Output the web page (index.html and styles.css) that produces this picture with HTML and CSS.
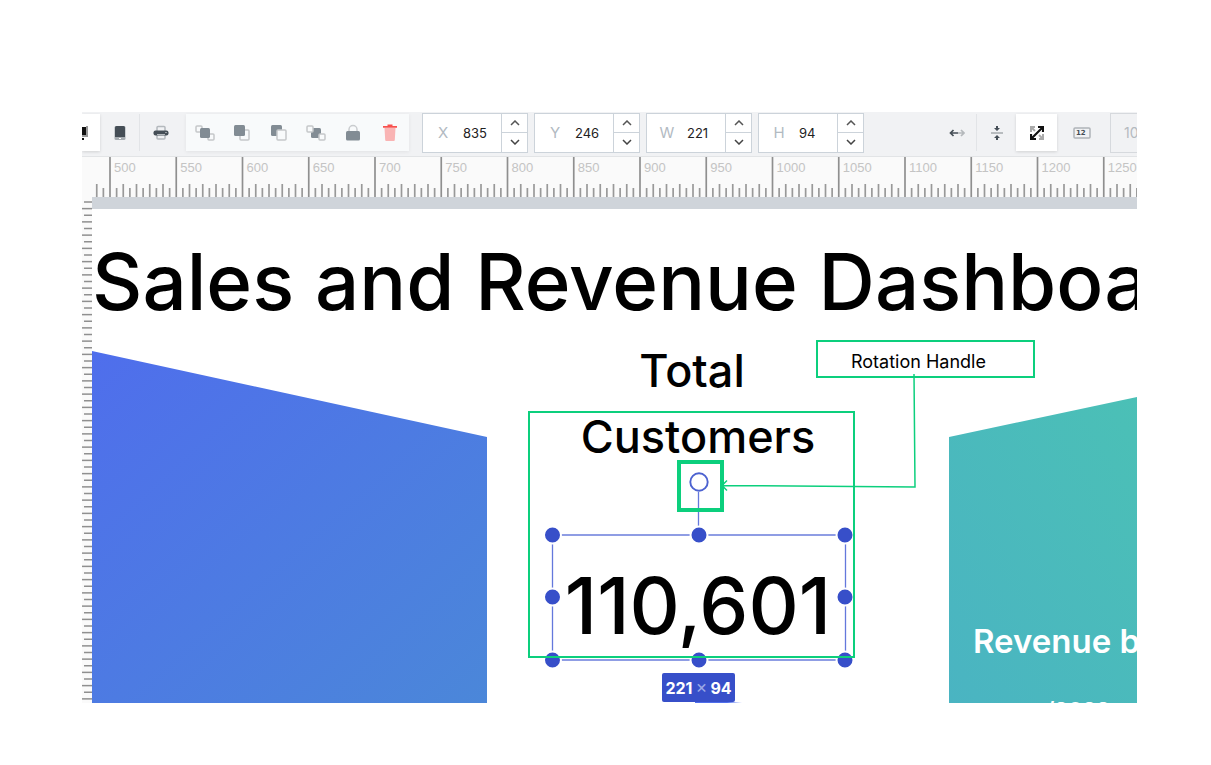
FILE: index.html
```html
<!DOCTYPE html>
<html lang="en">
<head>
<meta charset="utf-8">
<title>Sales and Revenue Dashboard</title>
<link rel="stylesheet" href="styles.css">
</head>
<body>
<main class="editor">
  <header class="toolbar">
    <button class="tool tool-edge active" aria-label="Desktop view"><svg width="18" height="20" viewBox="0 0 18 20"><path d="M0 4h5v9H0z" fill="#111"/><path d="M4 3h2v11H0v-2h4z" fill="#999"/><path d="M0 15h2v2H0z" fill="#111"/></svg></button>
    <button class="tool tool-phone" aria-label="Mobile view"><svg width="12" height="16" viewBox="0 0 12 16"><rect x=".5" y="1" width="11" height="14" rx="1.5" fill="#a5abb0"/><path d="M1 2.500Q1 1 2.500 1h7Q11 1 11 2.500V12H1z" fill="#454e56"/><path d="M5 13.500h2" stroke="#fff"/></svg></button>
    <span class="divider"></span>
    <button class="tool tool-print" aria-label="Print"><svg width="16" height="16" viewBox="0 0 16 16"><path d="M4 6V2.500Q4 1.500 5 1.500h6q1 0 1 1V6M4 10v3q0 1 1 1h6q1 0 1-1v-3" fill="none" stroke="#b4b9bd" stroke-width="1.500"/><rect x=".5" y="5.500" width="15" height="5" rx="2" fill="#454e56"/><path d="M4 9.500h8" stroke="#b4b9bd"/><circle cx="13" cy="7.500" r=".6" fill="#fff"/></svg></button>
    <div class="arrange">
      <button class="tool" aria-label="Bring forward"><svg width="20" height="18" viewBox="0 0 20 18"><g fill="none" stroke="#c5c8ca" stroke-width="1.500"><rect x="1" y="2" width="6" height="6" rx="1"/><rect x="13" y="10" width="6" height="6" rx="1"/></g><rect x="5" y="4" width="10" height="10" rx="1.500" fill="#828c94"/></svg></button>
      <button class="tool" aria-label="Bring to front"><svg width="18" height="18" viewBox="0 0 18 18"><rect x="7" y="6" width="9" height="10" rx="1" fill="none" stroke="#c5c8ca" stroke-width="1.500"/><rect x="1" y="1" width="11" height="11" rx="1.500" fill="#828c94"/></svg></button>
      <button class="tool" aria-label="Send to back"><svg width="18" height="18" viewBox="0 0 18 18"><rect x="1" y="1" width="11" height="11" rx="1.500" fill="#828c94"/><rect x="7" y="6" width="9" height="10" rx="1" fill="#f8fafb" stroke="#c5c8ca" stroke-width="1.500"/></svg></button>
      <button class="tool" aria-label="Send backward"><svg width="20" height="18" viewBox="0 0 20 18"><rect x="5" y="4" width="10" height="10" rx="1.500" fill="#828c94"/><g fill="#f8fafb" stroke="#c5c8ca" stroke-width="1.500"><rect x="1" y="2" width="6" height="6" rx="1"/><rect x="13" y="10" width="6" height="6" rx="1"/></g></svg></button>
      <button class="tool" aria-label="Lock"><svg width="16" height="18" viewBox="0 0 16 18"><path d="M4 8V5.500a4 4 0 0 1 8 0V8" fill="none" stroke="#c9cccf" stroke-width="1.500"/><rect x="1" y="7" width="14" height="9.500" rx="1.500" fill="#828c94"/></svg></button>
      <button class="tool" aria-label="Delete"><svg width="16" height="18" viewBox="0 0 16 18"><path d="M2.500 4h11l-.7 12q0 1-1 1H4.200q-1 0-1-1z" fill="#f9b4b4"/><path d="M1 2.800h14M5.500 1.500h5" stroke="#f8514e" stroke-width="1.800"/></svg></button>
    </div>
    <div class="fields">
      <div class="field"><label for="fx">X</label><input id="fx" value="835"><div class="steps"><button aria-label="Increase X"><svg width="10" height="6"><use href="#up"/></svg></button><button aria-label="Decrease X"><svg width="10" height="6"><use href="#down"/></svg></button></div></div>
      <div class="field"><label for="fy">Y</label><input id="fy" value="246"><div class="steps"><button aria-label="Increase Y"><svg width="10" height="6"><use href="#up"/></svg></button><button aria-label="Decrease Y"><svg width="10" height="6"><use href="#down"/></svg></button></div></div>
      <div class="field"><label for="fw">W</label><input id="fw" value="221"><div class="steps"><button aria-label="Increase width"><svg width="10" height="6"><use href="#up"/></svg></button><button aria-label="Decrease width"><svg width="10" height="6"><use href="#down"/></svg></button></div></div>
      <div class="field"><label for="fh">H</label><input id="fh" value="94"><div class="steps"><button aria-label="Increase height"><svg width="10" height="6"><use href="#up"/></svg></button><button aria-label="Decrease height"><svg width="10" height="6"><use href="#down"/></svg></button></div></div>
    </div>
    <div class="view">
      <button class="tool" aria-label="Fit width"><svg width="16" height="12" viewBox="0 0 16 12" fill="none" stroke-width="1.700"><path d="M9 6h6M12 3l3 3-3 3" stroke="#b5b9bc"/><path d="M9 6H1.500M4.500 3l-3 3 3 3" stroke="#454e56"/></svg></button>
      <span class="divider"></span>
      <button class="tool" aria-label="Fit height"><svg width="14" height="16" viewBox="0 0 14 16"><path d="M1 8h12" stroke="#a5aaae" stroke-width="1.500"/><path d="M6 1h2v2h2L7 6 4 3h2zM6 15h2v-2h2L7 10l-3 3h2z" fill="#454e56"/></svg></button>
      <button class="tool active" aria-label="Fit page"><svg width="14" height="14" viewBox="0 0 14 14"><g stroke="#aaa" stroke-width="2" fill="none"><path d="M1 6V1h4M1 1l4 4M13 8v5H9M13 13 9 9"/></g><g stroke="#111" stroke-width="2.200" fill="none"><path d="M8 1h5v5M13 1 1 13M1 8v5h5"/></g></svg></button>
      <button class="tool" aria-label="Actual size"><svg width="18" height="12" viewBox="0 0 18 12"><rect x="1" y="1" width="16" height="10" rx="1" fill="none" stroke="#afb4b8" stroke-width="1.500"/><text x="3" y="8" class="icon-text">12</text></svg></button>
      <input class="zoom" aria-label="Zoom" value="100">
    </div>
  </header>
  <svg class="ruler-top" id="rulerTop" role="img" aria-label="Horizontal ruler"></svg>
  <div class="workspace">
    <svg class="ruler-left" id="rulerLeft" role="img" aria-label="Vertical ruler"></svg>
    <section class="canvas">
      <svg class="layer" aria-hidden="true">
        <defs>
          <linearGradient id="blue" x1="0" y1="0" x2="1" y2="1"><stop offset="0" stop-color="#4f6eec"/><stop offset="1" stop-color="#4b87d9"/></linearGradient>
          <linearGradient id="teal" x1="0" y1="1" x2="1" y2="0"><stop offset="0" stop-color="#4ab4c2"/><stop offset="1" stop-color="#4bc0b6"/></linearGradient>
          <path id="up" d="M1 5l4-4 4 4" fill="none" stroke="#555" stroke-width="1.500"/>
          <path id="down" d="M1 1l4 4 4-4" fill="none" stroke="#444" stroke-width="1.500"/>
        </defs>
        <path d="M0 142 395 228V494H0z" fill="url(#blue)"/>
        <path d="M857 228l188-40v306H857z" fill="url(#teal)"/>
        <path d="M603 492q25 0 47 2h-47z" fill="#4f6eec"/>
      </svg>
      <h1 class="node title">Sales and Revenue Dashboard</h1>
      <h2 class="node metric">Total&nbsp;<br>Customers</h2>
      <p class="node value">110,601</p>
      <p class="node revenue">Revenue by</p>
      <p class="node period">/2022</p>
      <svg class="layer" aria-hidden="true">
        <path d="M460.500 326H753M460.500 451H753" stroke="#8f9de4" stroke-width="1.800"/>
        <path d="M460.500 326V451M753.500 326V451M606.500 283v43" stroke="#6478dc" stroke-width="1.300"/>
        <g fill="#374fc9" stroke="#fff" stroke-width="2"><circle cx="460.500" cy="326" r="8.500"/><circle cx="607" cy="326" r="8.500"/><circle cx="753" cy="326" r="8.500"/><circle cx="460.500" cy="388" r="8.500"/><circle cx="753" cy="388" r="8.500"/><circle cx="460.500" cy="451" r="8.500"/><circle cx="607" cy="451" r="8.500"/><circle cx="753" cy="451" r="8.500"/></g>
        <circle cx="607" cy="273" r="8.700" fill="#fff" stroke="#4c62d0" stroke-width="1.900"/>
        <g fill="none" stroke="#0ccf7d"><path d="M437 203H762V448H437z" stroke-width="2"/><path d="M587 253h43v48h-43z" stroke-width="4"/><path d="M822 165 823 278 631 276.500M635 271.500l-5 5 5 5" stroke-width="1.500"/></g>
      </svg>
      <p class="node badge">221<span class="times">×</span>94</p>
      <p class="node note">Rotation Handle</p>
    </section>
  </div>
</main>
<script src="rulers.js"></script>
</body>
</html>
```
FILE: styles.css
```css
* { box-sizing: border-box; }
body {
  margin: 0;
  min-height: 100vh;
  padding: 112px 74px 62px 82px;
  background: #fff;
  font-family: Inter, "Liberation Sans", sans-serif;
  display: flex;
}
button, input { font: inherit; border: 0; padding: 0; margin: 0; background: none; }
h1, h2, p { margin: 0; }
.editor { flex: 1; min-width: 0; display: flex; flex-direction: column; overflow: hidden; }

.toolbar {
  display: flex;
  align-items: center;
  height: 44px;
  padding-bottom: 3px;
  background: #f1f2f4;
  overflow: hidden;
}
.tool { flex: none; width: 37px; height: 37px; display: flex; align-items: center; justify-content: center; }
.tool.active { background: #fff; box-shadow: 0 1px 3px #0002; }
.tool-edge { width: 18px; justify-content: flex-start; }
.tool-phone { width: 39px; }
.tool-print { width: 42px; }
.divider { flex: none; width: 1px; height: 37px; background: #e2e4e7; }
.arrange { flex: none; display: flex; width: 223px; margin-left: 4px; background: #f8fafb; box-shadow: 0 1px 4px #0001; }
.fields { flex: none; display: flex; gap: 6px; margin-left: 13px; }
.field { display: flex; width: 106px; height: 40px; border: 1px solid #ccd3da; background: #fff; font-size: 13px; }
.field label { width: 40px; display: flex; align-items: center; justify-content: center; font-size: 15px; color: #b2bac2; }
.field input { flex: 1; min-width: 0; color: #222; }
.steps { flex: none; display: flex; flex-direction: column; width: 26px; border-left: 1px solid #ccd3da; }
.steps button { flex: 1; display: flex; align-items: center; justify-content: center; }
.steps button + button { border-top: 1px solid #ccd3da; }
.view { flex: none; display: flex; align-items: center; margin-left: auto; }
.view .tool { width: 39px; }
.view .tool.active { width: 41px; margin-right: 5px; }
.icon-text { font: bold 7px "DejaVu Sans", sans-serif; fill: #454e56; }
.zoom { width: 27px; height: 40px; margin-left: 9px; padding-left: 13px; border: 1px solid #d6d9dd; border-right: 0; font-size: 14px; color: #b5babf; }

.ruler-top { flex: none; display: block; width: 100%; height: 41px; background: #fafafa; border-top: 1px solid #e2e4e6; }
.ruler-label { font: 13px "Liberation Sans", sans-serif; fill: #c4c4c4; }
.workspace { flex: 1; min-height: 0; display: grid; grid-template-columns: 10px 1fr; }
.ruler-left { display: block; width: 100%; height: 100%; background: #fafafa; }
.canvas { position: relative; overflow: hidden; border-top: 12px solid #cfd4da; background: #fff; }
.layer { position: absolute; top: 0; left: 0; width: 100%; height: 100%; }

.node { position: absolute; white-space: nowrap; line-height: 1; color: #000; }
.title { left: 0; top: 34px; font-size: 78px; font-weight: 500; }
.metric { left: 450px; top: 129px; width: 312px; text-align: center; font-size: 45px; line-height: 66px; font-weight: 500; }
.value { left: 460px; top: 353px; width: 292px; text-align: center; font-size: 78px; line-height: 88px; font-weight: 500; }
.revenue { left: 881px; top: 416px; font-size: 33px; font-weight: 600; color: #fff; }
.period { left: 954px; top: 490px; font-size: 22px; font-weight: 600; color: #fff; }
.badge { left: 570px; top: 464px; width: 73px; height: 29px; border-radius: 2px; background: #374fc9; color: #fff; font-size: 16px; line-height: 30px; font-weight: 700; display: flex; justify-content: center; gap: 3px; }
.times { color: #9aa7e6; font-size: 18px; line-height: 28px; font-weight: 400; }
.note { left: 724px; top: 131px; width: 219px; height: 38px; padding-left: 33px; border: 2px solid #0ccf7d; font-size: 18px; line-height: 40px; }
```
FILE: rulers.js
```js
const NS = "http://www.w3.org/2000/svg";
const STEP = 6.625;

function add(parent, name, attrs, text) {
  const el = document.createElementNS(NS, name);
  for (const key in attrs) el.setAttribute(key, attrs[key]);
  if (text) el.textContent = text;
  parent.append(el);
}

const horizontal = document.getElementById("rulerTop");
const width = horizontal.getBoundingClientRect().width;
for (let i = -2; 28 + i * STEP < width; i++) {
  const x = 28 + i * STEP;
  const major = i % 10 === 0;
  const y = major ? 0 : i % 2 ? 31 : 27;
  add(horizontal, "path", { d: `M${x} ${y}V40`, stroke: major ? "#8f8f8f" : "#999", "stroke-width": 1.7 });
  if (major) add(horizontal, "text", { x: x + 4, y: 15, class: "ruler-label" }, String(500 + i * 5));
}

const vertical = document.getElementById("rulerLeft");
const height = vertical.getBoundingClientRect().height;
for (let i = 0; 5 + i * STEP < height; i++) {
  const y = 5 + i * STEP;
  add(vertical, "path", { d: `M${i % 2 ? 0 : 2} ${y}H10`, stroke: "#8f8f8f", "stroke-width": 1.5 });
}
```
